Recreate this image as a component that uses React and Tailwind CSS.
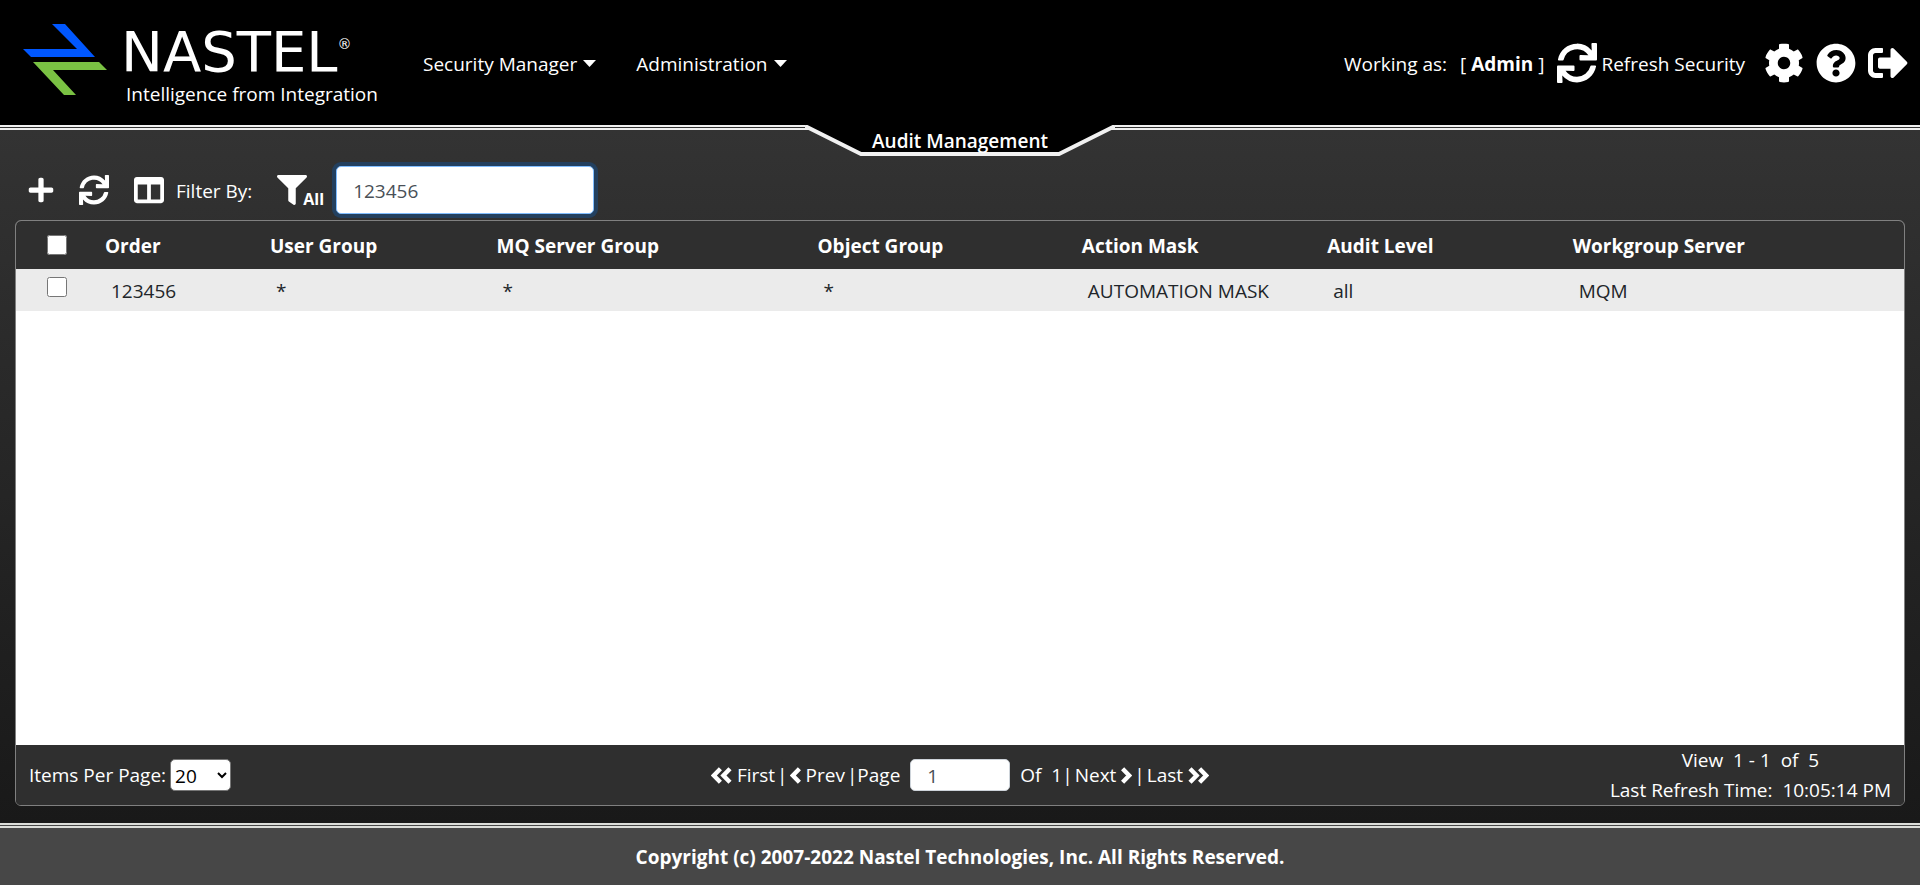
import React, { useState } from "react";
import {
  FaSync, FaCog, FaQuestionCircle, FaSignOutAlt, FaPlus, FaColumns, FaFilter,
} from "react-icons/fa";

const columns = [
  { label: "Order", width: "w-[165px]" },
  { label: "User Group", width: "w-[12%]" },
  { label: "MQ Server Group", width: "w-[17%]" },
  { label: "Object Group", width: "w-[14%]" },
  { label: "Action Mask", width: "w-[13%]" },
  { label: "Audit Level", width: "w-[13%]" },
  { label: "Workgroup Server", width: "" },
];

const rows = [["123456", "*", "*", "*", "AUTOMATION MASK", "all", "MQM"]];

function Logo() {
  return (
    <a href="#home" aria-label="Nastel home" className="flex w-[364px] items-start">
      <svg viewBox="0 0 84 72" className="mt-6 h-[72px] w-[84px] shrink-0" aria-hidden="true">
        <path d="M29 0h13l30 33H8L0 25h54z" fill="#0057ff" />
        <path d="M10 38h66l8 8H30l23 25H41z" fill="#7ac143" />
      </svg>
      <span className="ml-[14px] mt-5 flex flex-col">
        <span className="flex items-start font-['DejaVu_Sans'] text-[56px] leading-[64px]">
          NASTEL
          <span className="mt-4 text-[14px] leading-[16px]">®</span>
        </span>
        <span className="pl-[5px] text-[19px] leading-5">Intelligence from Integration</span>
      </span>
    </a>
  );
}

function Header() {
  return (
    <header className="flex h-[130px] items-start border-b-[5px] border-double border-[#f1f1f1] bg-black bg-clip-padding pl-[23px] pr-3">
      <Logo />
      <nav className="ml-9 mt-12 flex gap-10">
        {["Security Manager", "Administration"].map((item) => (
          <button key={item} type="button" className="flex items-center gap-[6px] leading-8">
            {item}
            <svg viewBox="0 0 13 7" className="mb-[2px] h-[7px] w-[13px]" aria-hidden="true">
              <path d="M0 0h13L6.500 7z" fill="currentColor" />
            </svg>
          </button>
        ))}
      </nav>
      <div className="ml-auto mt-[39px] flex h-12 items-center">
        <span className="pt-[2px]">Working as:</span>
        <span className="ml-[13px] pt-[2px]">[ <b>Admin</b> ]</span>
        <button type="button" className="ml-[13px] flex items-center gap-1">
          <FaSync className="size-10" />
          <span className="pt-[2px]">Refresh Security</span>
        </button>
        <button type="button" aria-label="Settings" className="ml-[19px]"><FaCog className="size-10" /></button>
        <button type="button" aria-label="Help" className="ml-3"><FaQuestionCircle className="size-10" /></button>
        <button type="button" aria-label="Sign out" className="ml-3"><FaSignOutAlt className="size-10" /></button>
      </div>
    </header>
  );
}

function TitleTab() {
  return (
    <div className="absolute left-1/2 top-[125px] h-8 w-[310px] -translate-x-1/2">
      <svg viewBox="0 0 310 32" className="absolute inset-0 size-full" aria-hidden="true">
        <path d="M0 0L56 29H254L310 0Z" fill="#000" />
        <path d="M0 1L56 29H254L310 1" fill="none" stroke="#f1f1f1" strokeWidth="4" />
      </svg>
      <h1 className="relative pt-1 text-center font-semibold leading-6">Audit Management</h1>
    </div>
  );
}

function Toolbar({ filter, onFilter }) {
  return (
    <div className="flex h-[90px] items-end px-[27px] pb-[6px]">
      <div className="flex h-12 items-center">
        <button type="button" aria-label="Add"><FaPlus className="size-7" /></button>
        <button type="button" aria-label="Refresh" className="ml-6"><FaSync className="size-[30px]" /></button>
        <button type="button" aria-label="Columns" className="ml-[25px]"><FaColumns className="size-[30px]" /></button>
        <label htmlFor="filter" className="ml-3 pt-[2px]">Filter By:</label>
        <button type="button" className="ml-[25px] flex items-end">
          <FaFilter className="size-[30px]" />
          <b className="-ml-1 text-[16px] leading-3">All</b>
        </button>
        <input
          id="filter"
          value={filter}
          onChange={(e) => onFilter(e.target.value)}
          className="ml-3 h-12 w-[258px] rounded-[5px] border border-[#80bdff] bg-white px-4 pt-[2px] text-[#495057] shadow-[0_0_0_4px_#23405f] outline-none"
        />
      </div>
    </div>
  );
}

const check = "block size-5 ml-[31px]";

function Grid() {
  return (
    <table className="w-full table-fixed text-left">
      <thead>
        <tr className="h-12 bg-[#2f2f2f]">
          <th className="w-[84px]"><input type="checkbox" aria-label="Select all" className={check} /></th>
          {columns.map((c) => (
            <th key={c.label} className={`${c.width} pl-[5px] pt-[2px] font-bold`}>{c.label}</th>
          ))}
        </tr>
      </thead>
      <tbody>
        {rows.map((r) => (
          <tr key={r[0]} className="h-[42px] bg-[#ebebeb] text-[#212529]">
            <td className="pb-[6px]"><input type="checkbox" aria-label={`Select ${r[0]}`} className={check} /></td>
            {r.map((v, i) => (
              <td key={i} className="pl-[11px] pt-[2px]">{v}</td>
            ))}
          </tr>
        ))}
      </tbody>
    </table>
  );
}

function Chevron({ double, right }) {
  return (
    <svg
      viewBox={double ? "0 0 21 17" : "0 0 11 17"}
      className={`${double ? "w-[21px]" : "w-[11px]"} h-[17px] ${right ? "rotate-180" : ""}`}
      fill="none"
      stroke="currentColor"
      strokeWidth="4.400"
      aria-hidden="true"
    >
      <path d="M9.400 1.700L2.800 8.500L9.400 15.300" />
      {double && <path d="M19 1.700L12.400 8.500L19 15.300" />}
    </svg>
  );
}

function Pager() {
  return (
    <div className="grid h-[60px] grid-cols-[1fr_auto_1fr] items-center bg-[#2f2f2f] px-[13px]">
      <div className="flex items-center gap-1">
        <label htmlFor="size">Items Per Page:</label>
        <select id="size" defaultValue="20" className="h-8 w-[61px] rounded-[5px] border border-[#767676] bg-white pt-[2px] text-black">
          <option>20</option>
          <option>50</option>
        </select>
      </div>
      <div className="flex items-center whitespace-pre">
        <button type="button" className="flex items-center gap-[5px]"><Chevron double />First</button>
        <span className="mx-[2px]">|</span>
        <button type="button" className="flex items-center gap-[5px]"><Chevron />Prev</button>
        <label htmlFor="page" className="ml-[2px]">|Page</label>
        <input id="page" defaultValue="1" className="mx-[10px] h-8 w-[100px] rounded-[5px] border border-[#ced4da] bg-white px-4 pt-[2px] text-[#495057]" />
        <span>Of  1|</span>
        <button type="button" className="ml-[2px] flex items-center gap-[5px]">Next<Chevron right /></button>
        <span className="mx-[2px]">|</span>
        <button type="button" className="flex items-center gap-[5px]">Last<Chevron double right /></button>
      </div>
      <div className="flex flex-col items-center justify-self-end whitespace-pre leading-[30px]">
        <span>View  1 - 1  of  5</span>
        <span>Last Refresh Time:  10:05:14 PM</span>
      </div>
    </div>
  );
}

export default function App() {
  const [filter, setFilter] = useState("123456");
  return (
    <div className="relative flex min-h-screen flex-col bg-[#333] font-['Open_Sans',sans-serif] text-[19px] leading-7 text-white">
      <Header />
      <TitleTab />
      <main className="flex flex-1 flex-col bg-linear-to-b from-[#333] to-[#191919] px-[15px] pb-[17px]">
        <div className="-mx-[15px]"><Toolbar filter={filter} onFilter={setFilter} /></div>
        <section className="flex flex-1 flex-col overflow-hidden rounded-[6px] border border-[#808080]">
          <div className="flex-1 bg-white"><Grid /></div>
          <Pager />
        </section>
      </main>
      <footer className="flex h-[62px] items-center justify-center border-t-[5px] border-double border-[#dcdeda] bg-[#474747] font-bold">
        Copyright (c) 2007-2022 Nastel Technologies, Inc. All Rights Reserved.
      </footer>
    </div>
  );
}
